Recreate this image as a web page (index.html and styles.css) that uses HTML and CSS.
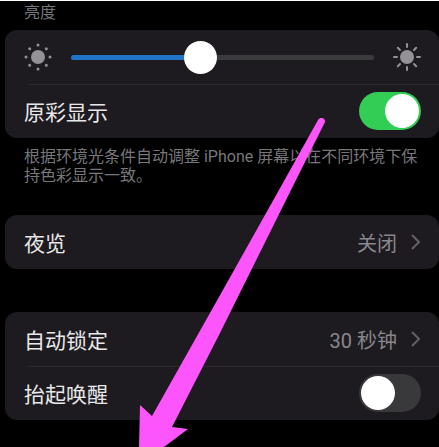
FILE: index.html
```html
<!DOCTYPE html>
<html lang="zh-CN">

<head>
  <meta charset="UTF-8">
  <meta name="viewport" content="width=device-width, initial-scale=1.0">
  <title>显示与亮度</title>
  <link rel="stylesheet" href="styles.css">
</head>

<body>
  <main class="settings">
    <h2><label for="brightness">亮度</label></h2>
    <section class="card">
      <div class="row">
        <svg class="sun" viewBox="0 0 28 28" aria-hidden="true">
          <circle cx="14" cy="14" r="7" />
          <g class="dots">
            <path d="M14 2v0M14 26v0M2 14h0M26 14h0M5.7 5.7h0M22.3 5.7h0M5.7 22.3h0M22.3 22.3h0" />
          </g>
        </svg>
        <input id="brightness" class="slider" type="range" min="0" max="100" value="42">
        <svg class="sun" viewBox="0 0 28 28" aria-hidden="true">
          <circle cx="14" cy="14" r="7" />
          <g class="rays">
            <path d="M14 1v3M14 24v3M1 14h3M24 14h3M4.8 4.8l2.2 2.2M21 21l2.2 2.2M4.8 23.2l2.2-2.2M21 7l2.2-2.2" />
          </g>
        </svg>
      </div>
      <div class="row">
        <label for="truetone">原彩显示</label>
        <input id="truetone" class="toggle" type="checkbox" role="switch" checked>
      </div>
    </section>
    <p class="note">根据环境光条件自动调整 iPhone 屏幕以在不同环境下保持色彩显示一致。</p>

    <section class="card">
      <button class="row" type="button">
        <span>夜览</span>
        <span class="value">关闭</span>
        <svg class="chevron" viewBox="0 0 10 16" aria-hidden="true"><path d="M1 1l7 7-7 7" /></svg>
      </button>
    </section>

    <section class="card">
      <button class="row" type="button">
        <span>自动锁定</span>
        <span class="value">30 秒钟</span>
        <svg class="chevron" viewBox="0 0 10 16" aria-hidden="true"><path d="M1 1l7 7-7 7" /></svg>
      </button>
      <div class="row">
        <label for="raise">抬起唤醒</label>
        <input id="raise" class="toggle" type="checkbox" role="switch">
      </div>
    </section>

    <svg class="arrow" viewBox="0 0 186 329" aria-hidden="true">
      <path d="M179 2Q182-2 185 1Q187 3 185 6L152 72L80 217L33 309L49 311L25 329H0L1 287L13 298L80 179L140 72Z" />
    </svg>
  </main>
</body>

</html>
```

FILE: styles.css
```css
body {
  margin: 0;
  background-color: black;
  color: #e8e8ea;
  font-family: Roboto, "Noto Sans CJK SC", sans-serif;
  font-size: 21px;
}

.settings {
  position: relative;
  border-top: 1px solid white;
  overflow: hidden;
  min-height: calc(100vh - 1px);
}

h2 {
  margin: 0;
  padding: 0 24px 5px;
  color: #77777b;
  font-size: 16px;
  font-weight: 400;
  line-height: 24px;
}

.card {
  margin: 0 0 43px 5px;
  background-color: #1d1b1f;
  border-radius: 12px;
}

.row {
  position: relative;
  display: flex;
  align-items: center;
  box-sizing: border-box;
  width: 100%;
  height: 54px;
  padding: 0 18px 0 19px;
  border: 0;
  background: none;
  color: inherit;
  font: inherit;
  text-align: left;
}

.row + .row::before {
  content: "";
  position: absolute;
  top: 0;
  left: 23px;
  right: 0;
  height: 1px;
  background-color: #2a292c;
}

.row label {
  flex-grow: 1;
}

.value {
  margin-left: auto;
  color: #88878c;
  font-size: 20px;
}

.chevron {
  width: 10px;
  height: 16px;
  margin-left: 14px;
  fill: none;
  stroke: #626166;
  stroke-width: 2;
}

.note {
  margin: 0;
  padding: 9px 18px 30px 24px;
  color: #77777b;
  font-size: 16px;
  line-height: 19px;
}

.card:has(+ .note) {
  margin-bottom: 0;
}

.sun {
  flex-shrink: 0;
  width: 28px;
  height: 28px;
  fill: #949297;
  stroke: #949297;
  stroke-width: 0;
  stroke-linecap: round;
}

.sun .dots {
  stroke-width: 3;
}

.sun .rays {
  stroke-width: 2;
}

.slider {
  appearance: none;
  flex-grow: 1;
  min-width: 0;
  height: 33px;
  margin: 0 19px;
  background: none;
}

.slider::-webkit-slider-runnable-track {
  height: 5px;
  border-radius: 3px;
  background: linear-gradient(to right, #2173c9 43%, #3b3a3d 43%);
}

.slider::-webkit-slider-thumb {
  appearance: none;
  width: 33px;
  height: 33px;
  margin-top: -14px;
  border-radius: 50%;
  background-color: white;
}

.toggle {
  appearance: none;
  display: flex;
  align-items: center;
  box-sizing: border-box;
  width: 62px;
  height: 38px;
  margin: 0;
  padding: 0 2px;
  border-radius: 19px;
  background-color: #39383b;
}

.toggle::before {
  content: "";
  width: 34px;
  height: 34px;
  border-radius: 50%;
  background-color: white;
}

.toggle:checked {
  justify-content: flex-end;
  background-color: #32cd55;
}

.arrow {
  position: absolute;
  top: 117px;
  left: 139px;
  width: 186px;
  height: 329px;
  fill: #fc55fc;
  pointer-events: none;
}
```
